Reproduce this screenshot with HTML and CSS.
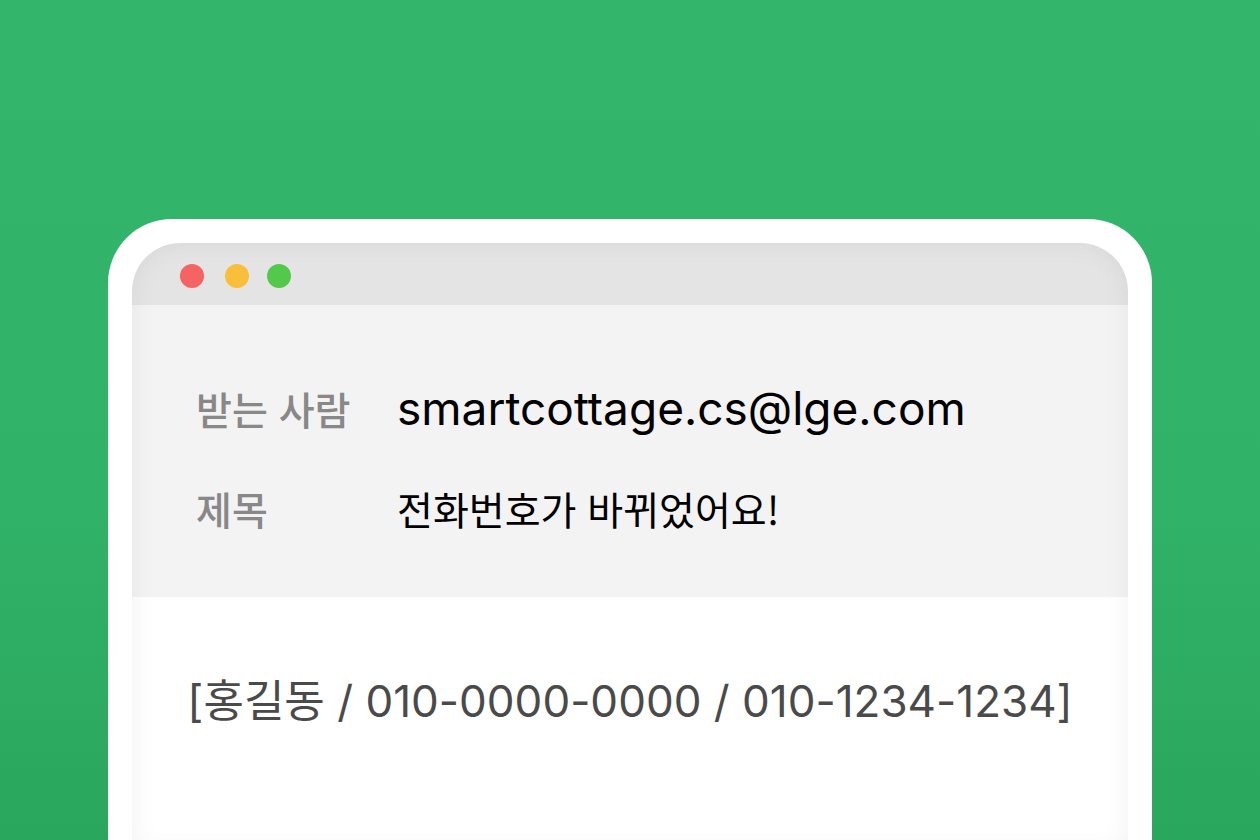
FILE: index.html
```html
<!DOCTYPE html>
<html lang="ko">
<head>
<meta charset="utf-8">
<title>Mail</title>
<link rel="stylesheet" href="styles.css">
</head>
<body>
<div class="stage">
  <div class="frame">
    <div class="window">
      <div class="titlebar">
        <span class="dot red"></span>
        <span class="dot yellow"></span>
        <span class="dot green"></span>
      </div>
      <div class="header">
        <div class="row">
          <div class="label">받는 사람</div>
          <div class="value email">smartcottage.cs@lge.com</div>
        </div>
        <div class="row">
          <div class="label">제목</div>
          <div class="value">전화번호가 바뀌었어요!</div>
        </div>
      </div>
      <div class="content">
        <p class="message">[홍길동 / 010-0000-0000 / 010-1234-1234]</p>
      </div>
    </div>
  </div>
</div>
</body>
</html>
```
FILE: styles.css
```css
html, body {
  margin: 0;
  padding: 0;
  height: 100%;
}
body {
  overflow: hidden;
  font-family: Inter, "Noto Sans CJK KR", sans-serif;
  background: linear-gradient(180deg, #33b56b 0%, #31b269 60%, #29a75c 100%);
}
.stage {
  height: 100%;
  display: flex;
  flex-direction: column;
  padding: 219px 108px 0;
  box-sizing: border-box;
}
.frame {
  flex: 1;
  background: #ffffff;
  border-radius: 64px 64px 0 0;
  padding: 24px 24px 0;
  display: flex;
  flex-direction: column;
}
.window {
  flex: 1;
  margin-bottom: -12px;
  border-radius: 48px 48px 0 0;
  overflow: hidden;
  display: flex;
  flex-direction: column;
  background: #ffffff;
  position: relative;
}
.window::after {
  content: "";
  position: absolute;
  inset: 0;
  border-radius: inherit;
  box-shadow: inset 0 0 26px rgba(0, 0, 0, 0.06);
  pointer-events: none;
}
.titlebar {
  height: 62px;
  box-sizing: border-box;
  padding-top: 4px;
  background: #e4e4e4;
  display: flex;
  align-items: center;
  padding-left: 48px;
  gap: 20px;
}
.dot {
  width: 24px;
  height: 24px;
  border-radius: 50%;
}
.dot.red { background: #f56462; }
.dot.yellow { background: #f9bf3b; margin-left: 1px; }
.dot.green { background: #53c94b; margin-left: -2px; }
.header {
  background: #f3f3f3;
  padding: 78px 0 64px 64px;
  display: flex;
  flex-direction: column;
  gap: 50px;
}
.row {
  display: flex;
  align-items: center;
  height: 50px;
}
.label {
  width: 201px;
  font-size: 39px;
  color: #888888;
  font-family: "Noto Sans CJK KR", sans-serif;
  font-weight: 500;
}
.value {
  font-size: 39px;
  color: #000000;
  font-family: "Noto Sans CJK KR", sans-serif;
}
.value.email {
  font-family: Inter, sans-serif;
  font-size: 46px;
}
.content {
  flex: 1;
  padding-top: 77px;
}
.message {
  margin: 0;
  text-align: center;
  font-size: 44px;
  line-height: 54px;
  color: #4a4a4a;
  font-family: Inter, "Noto Sans CJK KR", sans-serif;
}
```
